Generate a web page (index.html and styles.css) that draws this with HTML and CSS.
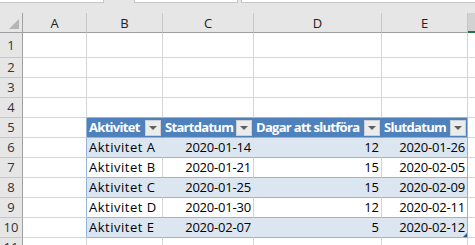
FILE: index.html
```html
<!DOCTYPE html>
<html lang="sv">
<head>
<meta charset="utf-8">
<title>Tabell</title>
<link rel="stylesheet" href="styles.css">
</head>
<body>
<div class="topbar">
  <div class="box namebox"></div>
  <div class="box fxbox"></div>
  <div class="box formula"></div>
</div>
<div class="sheet">
  <div class="corner"><span class="tri"></span></div>
  <div class="ch">A</div><div class="ch">B</div><div class="ch">C</div><div class="ch">D</div><div class="ch">E</div><div class="ch chf"></div>

  <div class="rh">1</div><div class="c"></div><div class="c"></div><div class="c"></div><div class="c"></div><div class="c"></div><div class="c cf"></div>
  <div class="rh">2</div><div class="c"></div><div class="c"></div><div class="c"></div><div class="c"></div><div class="c"></div><div class="c cf"></div>
  <div class="rh">3</div><div class="c"></div><div class="c"></div><div class="c"></div><div class="c"></div><div class="c"></div><div class="c cf"></div>
  <div class="rh">4</div><div class="c"></div><div class="c tt"></div><div class="c tt"></div><div class="c tt"></div><div class="c tt"></div><div class="c cf"></div>

  <div class="rh">5</div><div class="c tl"></div>
  <div class="th"><span class="tht">Aktivitet</span><span class="dd"></span></div>
  <div class="th"><span class="tht">Startdatum</span><span class="dd"></span></div>
  <div class="th"><span class="tht">Dagar att slutföra</span><span class="dd"></span></div>
  <div class="th last"><span class="tht">Slutdatum</span><span class="dd"></span></div>
  <div class="c cf"></div>

  <div class="rh">6</div><div class="c tl"></div>
  <div class="td band"><span class="txt">Aktivitet A</span></div>
  <div class="td band num"><span class="date">2020-01-14</span></div>
  <div class="td band num">12</div>
  <div class="td band num last"><span class="date">2020-01-26</span></div>
  <div class="c cf"></div>

  <div class="rh">7</div><div class="c tl"></div>
  <div class="td"><span class="txt">Aktivitet B</span></div>
  <div class="td num"><span class="date">2020-01-21</span></div>
  <div class="td num">15</div>
  <div class="td num last"><span class="date">2020-02-05</span></div>
  <div class="c cf"></div>

  <div class="rh">8</div><div class="c tl"></div>
  <div class="td band"><span class="txt">Aktivitet C</span></div>
  <div class="td band num"><span class="date">2020-01-25</span></div>
  <div class="td band num">15</div>
  <div class="td band num last"><span class="date">2020-02-09</span></div>
  <div class="c cf"></div>

  <div class="rh">9</div><div class="c tl"></div>
  <div class="td"><span class="txt">Aktivitet D</span></div>
  <div class="td num"><span class="date">2020-01-30</span></div>
  <div class="td num">12</div>
  <div class="td num last"><span class="date">2020-02-11</span></div>
  <div class="c cf"></div>

  <div class="rh">10</div><div class="c tl"></div>
  <div class="td band"><span class="txt">Aktivitet E</span></div>
  <div class="td band num"><span class="date">2020-02-07</span></div>
  <div class="td band num">5</div>
  <div class="td band num last corner-cell"><span class="date">2020-02-12</span><span class="handle"></span></div>
  <div class="c cf"></div>

  <div class="rh">11</div><div class="c"></div><div class="c"></div><div class="c"></div><div class="c"></div><div class="c"></div><div class="c cf"></div>
</div>
</body>
</html>
```
FILE: styles.css
```css
html, body {
  margin: 0;
  padding: 0;
}
body {
  width: 475px;
  height: 245px;
  overflow: hidden;
  background: #e6e6e6;
  font-family: "Open Sans", "Liberation Sans", sans-serif;
  font-size: 13px;
  color: #000;
}
.topbar {
  display: flex;
  height: 3px;
  margin-bottom: 10px;
}
.box {
  height: 3px;
  box-sizing: border-box;
  background: #fff;
  border-bottom: 1px solid #c6c6c6;
}
.namebox {
  width: 104px;
  border-right: 1px solid #c6c6c6;
}
.fxbox {
  width: 104px;
  margin-left: 30px;
  border-left: 1px solid #c6c6c6;
  border-right: 1px solid #c6c6c6;
}
.formula {
  flex: 1;
  margin-left: 3px;
  border-left: 1px solid #c6c6c6;
}
.sheet {
  display: grid;
  grid-template-columns: 23px 64px 76px 91px 128px 86px 1fr;
  grid-template-rows: 20px 25px repeat(9, 20px) 20px;
}
.sheet > div {
  box-sizing: border-box;
  line-height: 19px;
  white-space: nowrap;
  overflow: hidden;
}
.corner {
  position: relative;
  background: #e6e6e6;
  border-right: 1px solid #9f9f9f;
  border-bottom: 1px solid #9f9f9f;
}
.tri {
  position: absolute;
  right: 3px;
  bottom: 3px;
  width: 0;
  height: 0;
  border-left: 10px solid transparent;
  border-bottom: 10px solid #b5b5b5;
}
.ch {
  background: #e6e6e6;
  border-right: 1px solid #c6c6c6;
  border-bottom: 1px solid #9f9f9f;
  text-align: center;
  color: #222;
  padding-top: 1px;
}
.chf {
  background: #d2d2d2;
  border-right: none;
  border-bottom: 2px solid #217346;
}
.rh {
  background: #e6e6e6;
  border-right: 1px solid #9f9f9f;
  border-bottom: 1px solid #c6c6c6;
  color: #333;
  display: flex;
  align-items: center;
  justify-content: center;
}
.c {
  background: #fff;
  border-right: 1px solid #d4d4d4;
  border-bottom: 1px solid #d4d4d4;
}
.cf {
  border-right: none;
}
.tt {
  border-bottom-color: #95b3d7;
}
.tl {
  border-right-color: #95b3d7;
}
.th {
  background: #4f81bd;
  border-right: 1px solid #4f81bd;
  border-bottom: 1px solid #95b3d7;
  color: #fff;
  font-weight: 700;
  display: flex;
  justify-content: space-between;
  padding-left: 2px;
  padding-right: 1px;
}
.tht {
  letter-spacing: -0.7px;
}
.dd {
  position: relative;
  flex: none;
  width: 16px;
  height: 16px;
  margin-top: 2px;
  box-sizing: border-box;
  background: #ececec;
  border: 1px solid #d0d0d0;
}
.dd::after {
  content: "";
  position: absolute;
  left: 3px;
  top: 5px;
  width: 0;
  height: 0;
  border-left: 4px solid transparent;
  border-right: 4px solid transparent;
  border-top: 4px solid #5f5f5f;
}
.td {
  background: #fff;
  border-right: 1px solid #d4d4d4;
  border-bottom: 1px solid #95b3d7;
  padding-left: 2px;
  padding-right: 2px;
}
.band {
  background: #dce6f1;
  border-right-color: #dce6f1;
}
.last {
  border-right-color: #95b3d7;
}
.num {
  text-align: right;
}
.txt {
  letter-spacing: 0.5px;
}
.date {
  letter-spacing: -0.2px;
}
.corner-cell {
  position: relative;
}
.handle {
  position: absolute;
  right: 0;
  bottom: 0;
  width: 0;
  height: 0;
  border-left: 4px solid transparent;
  border-bottom: 4px solid #2f5597;
}
```
